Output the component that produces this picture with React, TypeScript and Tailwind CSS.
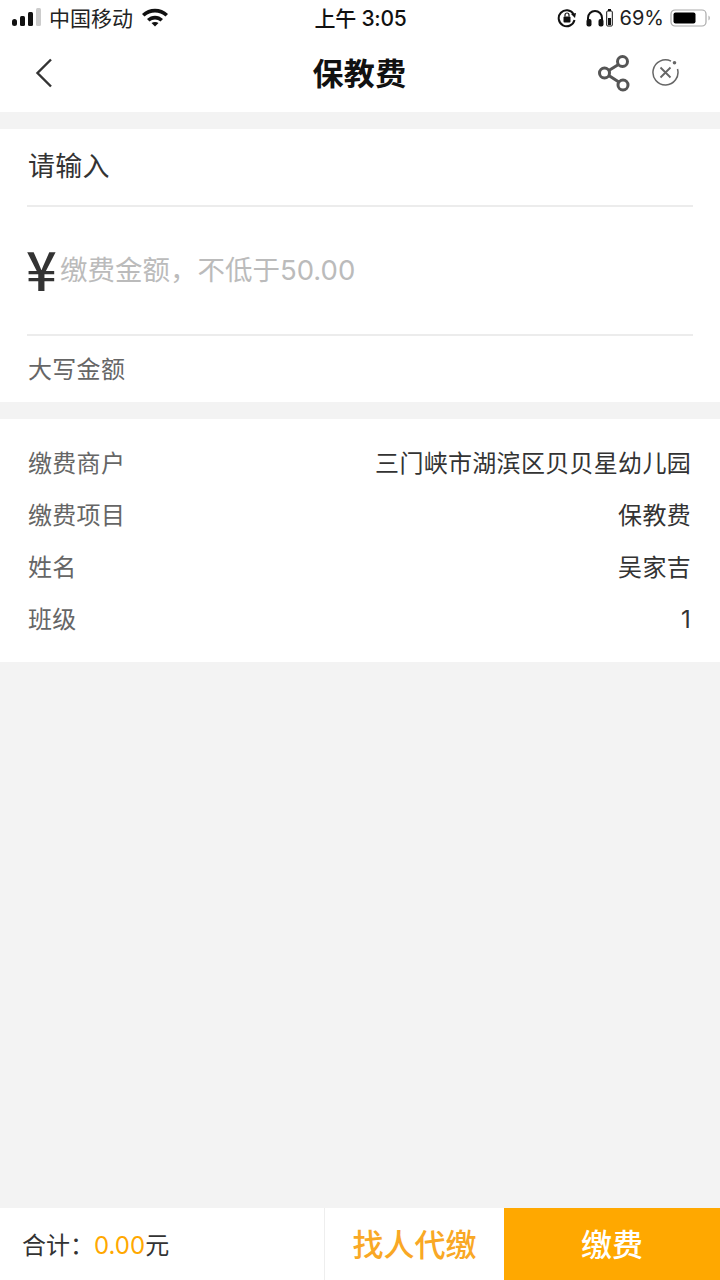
import React from "react";

const cjk = "font-['Inter','Noto_Sans_CJK_SC','Liberation_Sans',sans-serif]";

function StatusBar() {
  return (
    <div className="flex h-9 items-center justify-between bg-white pl-3 pr-[9px] text-black">
      <div className="flex w-[240px] items-center">
        {/* signal */}
        <svg width="30" height="20" viewBox="0 0 30 20" className="-mt-px">
          <rect x="0" y="11" width="5" height="7" rx="2.500" fill="#111" />
          <rect x="8" y="8" width="5" height="10" rx="1.500" fill="#111" />
          <rect x="16" y="4" width="5" height="14" rx="1.500" fill="#111" />
          <rect x="24" y="0" width="5" height="18" rx="1.500" fill="#ccc" />
        </svg>
        <span className="ml-[7px] text-[21px] leading-none text-[#222]">中国移动</span>
        <svg width="28" height="20" viewBox="0 0 28 20" className="ml-[8px] -mt-[3px]">
          <path d="M1 7 C8 0 20 0 27 7 L24.500 9.500 C18.500 4 9.500 4 3.500 9.500 Z" fill="#111" />
          <path d="M6 12 C10.500 7.500 17.500 7.500 22 12 L19.500 14.500 C16.500 11.800 11.500 11.800 8.500 14.500 Z" fill="#111" />
          <path d="M10.500 16 C12.500 14.500 15.500 14.500 17.500 16 L14 19.500 Z" fill="#111" />
        </svg>
      </div>
      <span className="pr-[2px] text-[21px] font-medium leading-none tracking-[-0.25px] text-[#111]">上午 3:05</span>
      <div className="flex w-[240px] items-center justify-end">
        <svg width="20" height="20" viewBox="0 0 20 20" className="mr-[9px]">
          <path d="M16.500 6 A8 8 0 1 0 17.500 12" fill="none" stroke="#111" strokeWidth="2" />
          <path d="M14 6 L19 5 L18 10 Z" fill="#111" />
          <rect x="6.500" y="8.500" width="7" height="6" rx="1" fill="#111" />
          <path d="M8 8.500 V7 a2 2 0 0 1 4 0 V8.500" fill="none" stroke="#111" strokeWidth="1.200" />
        </svg>
        <svg width="18" height="18" viewBox="0 0 18 18">
          <path d="M2 13 V9 a7 7 0 0 1 14 0 V13" fill="none" stroke="#111" strokeWidth="2" />
          <rect x="0.500" y="10" width="5" height="7.500" rx="2" fill="#111" />
          <rect x="12.500" y="10" width="5" height="7.500" rx="2" fill="#111" />
        </svg>
        <svg width="7" height="18" viewBox="0 0 7 18" className="ml-[2px]">
          <rect x="2" y="0" width="3" height="2" fill="#111" />
          <rect x="0.700" y="2" width="5.600" height="15" rx="1" fill="none" stroke="#111" strokeWidth="1" />
          <rect x="2" y="9" width="3" height="7" fill="#111" />
        </svg>
        <span className="ml-[7px] text-[20px] leading-none text-[#222]">69%</span>
        <svg width="41" height="20" viewBox="0 0 41 20" className="ml-[6px]">
          <rect x="1" y="2" width="35" height="16" rx="4" fill="none" stroke="#aaa" strokeWidth="1.200" />
          <rect x="3.500" y="4.500" width="22" height="11" rx="2" fill="#000" />
          <path d="M38.500 7.500 a3 3 0 0 1 0 5 Z" fill="#aaa" />
        </svg>
      </div>
    </div>
  );
}

function NavBar() {
  return (
    <div className="relative flex h-[76px] items-center justify-between bg-white pl-[34px] pr-[40px]">
      <svg width="20" height="30" viewBox="0 0 20 30" className="-mt-[2px]">
        <path d="M17 1.500 L3.500 15 L17 28.500" fill="none" stroke="#333" strokeWidth="2.400" />
      </svg>
      <span className="absolute left-0 right-0 -mt-[2px] pr-[1px] text-center text-[31px] font-bold leading-none tracking-[0.4px] text-[#111]">
        保教费
      </span>
      <div className="-mt-[2px] flex items-center gap-[20px]">
        <svg width="34" height="38" viewBox="0 0 34 38">
          <g fill="none" stroke="#555" strokeWidth="3">
            <circle cx="25.500" cy="7.500" r="5" />
            <circle cx="7.500" cy="19" r="5" />
            <circle cx="26" cy="31" r="5" />
            <path d="M21.500 10.500 L11.800 16.500 M11.800 21.500 L21.800 28" />
          </g>
        </svg>
        <svg width="29" height="29" viewBox="0 0 29 29" className="-mt-[1px]">
          <path d="M20 3.200 A12.500 12.500 0 1 0 26.500 11" fill="none" stroke="#666" strokeWidth="1.500" />
          <circle cx="23.500" cy="4.800" r="1.800" fill="#666" />
          <path d="M9.500 9.500 L19.500 19.500 M19.500 9.500 L9.500 19.500" stroke="#666" strokeWidth="1.800" />
        </svg>
      </div>
    </div>
  );
}

function InfoRow({ label, value }: { label: string; value: string }) {
  return (
    <div className="flex h-[52px] items-center justify-between pt-[2px] text-[24px] leading-none tracking-[0.3px]">
      <span className="text-[#666]">{label}</span>
      <span className="text-[#333]">{value}</span>
    </div>
  );
}

export default function App() {
  return (
    <div className={`flex h-[1280px] w-[720px] flex-col overflow-hidden bg-[#f3f3f3] ${cjk}`}>
      <StatusBar />
      <NavBar />

      <div className="mt-[17px] h-[273px] bg-white pl-[27px] pr-[27px]">
        <div className="flex h-[78px] items-center border-b-2 border-[#ececec] pl-[1px] pb-[1px] text-[27px] leading-none tracking-[0.3px] text-[#333]">
          请输入
        </div>
        <div className="flex h-[129px] items-center border-b-2 border-[#ececec] pb-[3px]">
          <span className="-ml-[1px] -mt-[3px] w-[34px] font-['Noto_Sans_CJK_SC',sans-serif] text-[54px] font-medium leading-none text-[#333]">
            ¥
          </span>
          <span className="pt-[4px] text-[27.5px] leading-none text-[#bbb]">缴费金额，不低于50.00</span>
        </div>
        <div className="flex h-[66px] items-center pl-[1px] pt-[2px] text-[24px] leading-none tracking-[0.3px] text-[#666]">
          大写金额
        </div>
      </div>

      <div className="mt-[17px] h-[243px] bg-white pl-[28px] pr-[29px] pt-[18px]">
        <InfoRow label="缴费商户" value="三门峡市湖滨区贝贝星幼儿园" />
        <InfoRow label="缴费项目" value="保教费" />
        <InfoRow label="姓名" value="吴家吉" />
        <InfoRow label="班级" value="1" />
      </div>

      <div className="mt-auto flex h-[72px] bg-white">
        <div className="flex w-[325px] items-center border-r border-[#eeeeee] pl-[22px] pt-[3px] text-[24px] leading-none text-[#333]">
          合计：<span className="text-[#ffa800]">0.00</span>元
        </div>
        <div className="flex w-[179px] items-center justify-center pt-[1px] text-[31px] font-medium leading-none text-[#f9a825]">
          找人代缴
        </div>
        <div className="flex flex-1 items-center justify-center bg-[#ffa800] pt-[1px] text-[31px] font-medium leading-none text-white">
          缴费
        </div>
      </div>
    </div>
  );
}
